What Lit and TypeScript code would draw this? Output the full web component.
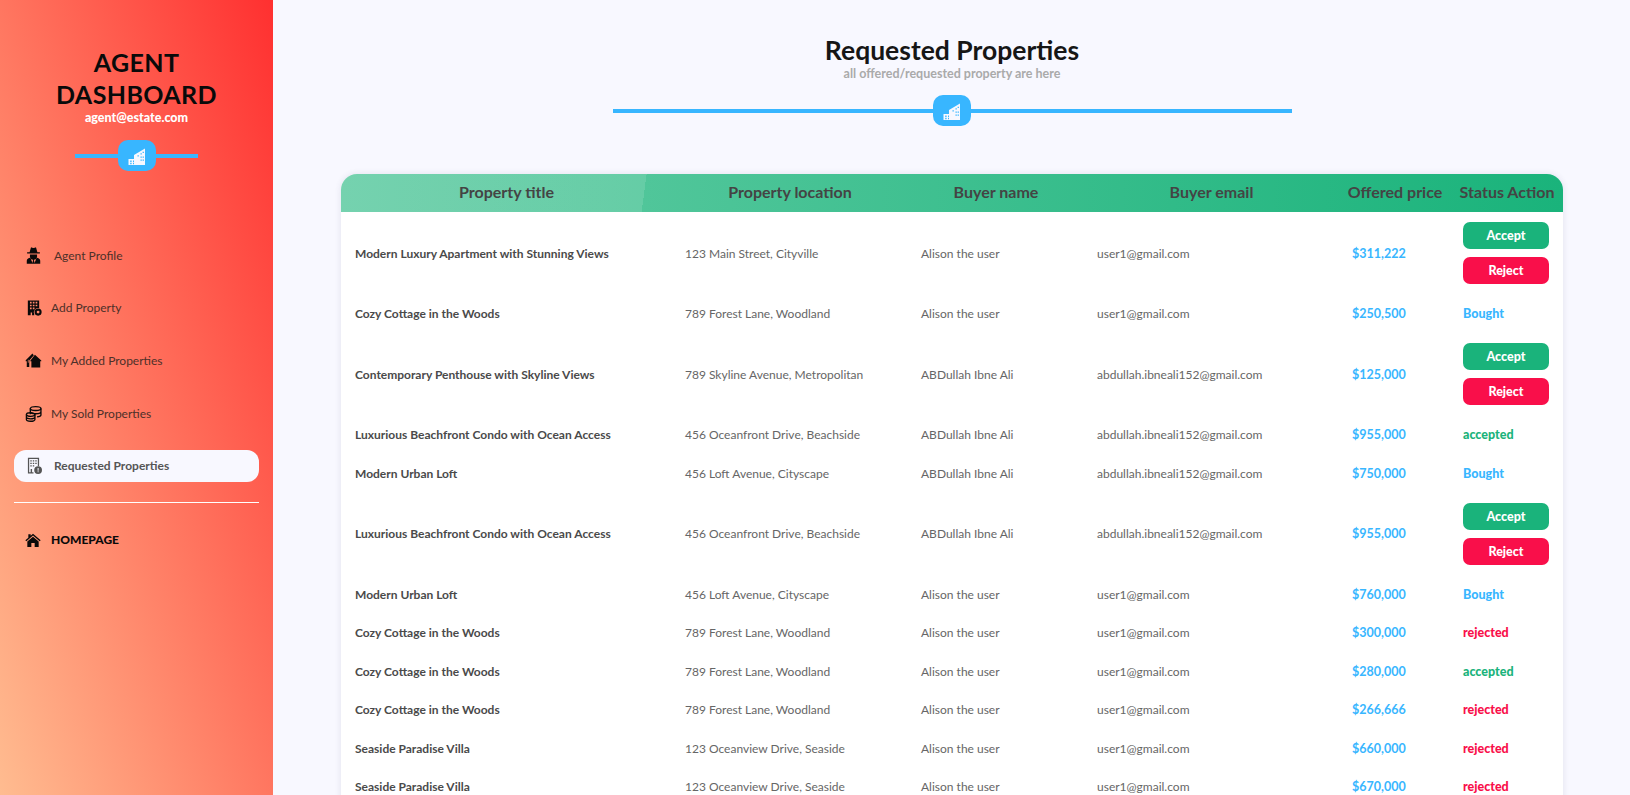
import { LitElement, html, css, svg } from "lit";
import { customElement } from "lit/decorators.js";

type Row = {
  title: string;
  location: string;
  buyer: string;
  email: string;
  price: string;
  status: "pending" | "Bought" | "accepted" | "rejected";
};

const ali = { buyer: "ABDullah Ibne Ali", email: "abdullah.ibneali152@gmail.com" };
const alison = { buyer: "Alison the user", email: "user1@gmail.com" };
const cottage = { title: "Cozy Cottage in the Woods", location: "789 Forest Lane, Woodland", ...alison };
const villa = { title: "Seaside Paradise Villa", location: "123 Oceanview Drive, Seaside", ...alison };
const condo = { title: "Luxurious Beachfront Condo with Ocean Access", location: "456 Oceanfront Drive, Beachside", ...ali };
const loft = { title: "Modern Urban Loft", location: "456 Loft Avenue, Cityscape" };

const rows: Row[] = [
  { title: "Modern Luxury Apartment with Stunning Views", location: "123 Main Street, Cityville", ...alison, price: "$311,222", status: "pending" },
  { ...cottage, price: "$250,500", status: "Bought" },
  { title: "Contemporary Penthouse with Skyline Views", location: "789 Skyline Avenue, Metropolitan", ...ali, price: "$125,000", status: "pending" },
  { ...condo, price: "$955,000", status: "accepted" },
  { ...loft, ...ali, price: "$750,000", status: "Bought" },
  { ...condo, price: "$955,000", status: "pending" },
  { ...loft, ...alison, price: "$760,000", status: "Bought" },
  { ...cottage, price: "$300,000", status: "rejected" },
  { ...cottage, price: "$280,000", status: "accepted" },
  { ...cottage, price: "$266,666", status: "rejected" },
  { ...villa, price: "$660,000", status: "rejected" },
  { ...villa, price: "$670,000", status: "rejected" },
];

const buildingIcon = svg`<path fill-rule="evenodd" d="M9 11 20 4.500V21H9ZM12.500 11.200h1.300v1.300h-1.300ZM15.500 9.200h1.300v1.300h-1.300ZM17.600 7.800h1.300v1.300h-1.300ZM15.500 12.500h1.300v1.300h-1.300ZM17.600 12.500h1.300v1.300h-1.300ZM15.500 15.500h1.300v1.300h-1.300ZM17.600 15.500h1.300v1.300h-1.300Z"/><path fill-rule="evenodd" d="M3.500 15H12.500V21H3.500ZM5.200 16.500h1.400v1.400H5.200ZM8 16.500h1.400v1.400H8ZM5.200 18.800h1.400v1.400H5.200ZM8 18.800h1.400v1.400H8Z"/>`;

const gridWindows = "M7 4h2.400v2.400H7ZM11 4h2.400v2.400H11ZM15 4h2.400v2.400H15ZM7 8h2.400v2.400H7ZM11 8h2.400v2.400H11ZM15 8h2.400v2.400H15ZM7 12h2.400v2.400H7ZM11 12h2.400v2.400H11Z";

const icons = {
  agent: svg`<path d="M8.500 .5c1 .7 2 .9 3.500.9s2.500-.2 3.500-.9l2 7H21v1.800H3V7.500h3.500Z"/><path d="M7 10.500h10v2.500a5 5 0 0 1-10 0Z"/><path d="M2.500 23.500v-4c0-2.500 2.500-4 5-4.200L10.500 22.500l1-4.500-.7-1.500h2.400L12.500 18l1 4.500 3-7.200c2.500.2 5 1.700 5 4.200v4Z"/>`,
  add: svg`<path fill-rule="evenodd" d="M4 2H20V13A6 6 0 0 0 13 21V23H10V19H8V23H4Z${gridWindows}"/><path fill-rule="evenodd" d="M18.500 13.500a5 5 0 1 1 0 10 5 5 0 0 1 0-10ZM18.500 16.500a2 2 0 1 0 0 4 2 2 0 0 0 0-4Z"/>`,
  house: svg`<path d="M14 4 23 12V13H21.500V22H9V13H7.500V12.500Z"/><path d="M10.500 2 1 11.500V13H2.500V21H6V12L12.500 4.500 11.500 3.500 5 10.500V15H4V11.500L11.500 3.500Z"/>`,
  coins: svg`<g fill="none" stroke="currentColor" stroke-width="1.900"><ellipse cx="15" cy="5" rx="7.500" ry="2.800"/><path d="M7.500 5v8M22.500 5v9c0 1.400-2.500 2.500-5.500 2.700M7.500 9.500c0 1.500 3.300 2.800 7.500 2.800s7.500-1.300 7.500-2.800"/><ellipse cx="8" cy="13.500" rx="6" ry="2.500"/><path d="M2 13.500v7c0 1.400 2.700 2.500 6 2.500s6-1.100 6-2.500v-7M2 17c0 1.400 2.700 2.500 6 2.500s6-1.100 6-2.500"/></g>`,
  request: svg`<path fill="none" stroke="currentColor" stroke-width="1.800" d="M12 22.500H5V1.800H19V13"/><path d="M7.500 4.500h2v2h-2ZM11 4.500h2v2h-2ZM14.500 4.500h2v2h-2ZM7.500 8h2v2h-2ZM11 8h2v2h-2ZM14.500 8h2v2h-2ZM7.500 11.500h2v2h-2ZM11 11.500h2v2h-2ZM8 17h2v5.500H8Z"/><path fill-rule="evenodd" d="M18.500 13a5.500 5.500 0 1 1 0 11 5.500 5.500 0 0 1 0-11ZM17.800 15.500v4h1.400v-4ZM17.800 20.200v1.400h1.400v-1.400Z"/>`,
  home: svg`<path d="M12 2.500 23.500 12.500 22 14 12 5.300 2 14 .5 12.500 5 8.600V3.500h3.500v2.100Z"/><path d="M12 7 20.500 14.300V22.500H14.500V16.500H9.500V22.500H3.500V14.300Z"/>`,
};

const menu = [
  { icon: icons.agent, label: "Agent Profile", wide: true },
  { icon: icons.add, label: "Add Property" },
  { icon: icons.house, label: "My Added Properties" },
  { icon: icons.coins, label: "My Sold Properties" },
  { icon: icons.request, label: "Requested Properties", wide: true, active: true },
];

@customElement("app-root")
export class AppRoot extends LitElement {
  static styles = css`
    :host {
      display: flex;
      height: 100vh;
      overflow: hidden;
      background: #f8f8ff;
      font-family: "Lato", "Noto Sans", sans-serif;
      color: #4a4a4a;
    }
    svg {
      display: block;
      fill: currentColor;
      flex: none;
    }
    .sidebar {
      width: 273px;
      flex: none;
      box-sizing: border-box;
      padding: 46px 14px 0;
      background: linear-gradient(to top right, #ffbc90 0%, #ff3030 100%);
    }
    .brand {
      text-align: center;
    }
    .brand h1 {
      margin: 0;
      font-size: 25px;
      line-height: 32px;
      font-weight: 700;
      color: #0a0a0a;
      letter-spacing: 0.4px;
    }
    .brand p {
      margin: 0;
      font-size: 12.500px;
      line-height: 16px;
      font-weight: 900;
      color: #fff;
    }
    .rule {
      display: flex;
      align-items: center;
      justify-content: center;
    }
    .rule::before,
    .rule::after {
      content: "";
      flex: 1;
      height: 4px;
      background: #38b6ff;
    }
    .rule .badge {
      width: 38px;
      height: 31px;
      border-radius: 10px;
      background: #38b6ff;
      color: #f8f8ff;
      display: flex;
      align-items: center;
      justify-content: center;
    }
    .brand .rule {
      width: 123px;
      margin: 14px auto 0;
    }
    nav {
      margin-top: 68px;
      display: flex;
      flex-direction: column;
      gap: 20.700px;
    }
    .item {
      height: 32px;
      display: flex;
      align-items: center;
      gap: 9px;
      padding-left: 11px;
      border-radius: 12px;
      font-size: 12px;
      color: #4d3029;
    }
    .item.wide {
      gap: 12px;
    }
    .item.active {
      background: #f8f8ff;
      color: #555;
      font-weight: 700;
    }
    .item svg {
      color: #0a0a0a;
    }
    .item.active svg {
      color: #555;
    }
    hr {
      margin: 20px 0 21px;
      border: 0;
      border-top: 1px solid #fff;
    }
    .item.home {
      gap: 10px;
      font-weight: 900;
      color: #0a0a0a;
    }
    main {
      flex: 1;
      min-width: 0;
      padding: 34px 67px 0 68px;
    }
    .head {
      width: 679px;
      margin: 0 auto;
      text-align: center;
    }
    .head h2 {
      margin: 0;
      font-size: 26.500px;
      line-height: 32px;
      font-weight: 700;
      color: #161616;
    }
    .head p {
      margin: 0 0 13px;
      font-size: 12.500px;
      line-height: 16px;
      font-weight: 700;
      color: #aaa;
    }
    .card {
      margin-top: 48px;
      border-radius: 16px 16px 0 0;
      overflow: hidden;
      background: #fff;
      box-shadow: 0 0 6px rgba(60, 60, 110, 0.12);
    }
    table {
      width: 100%;
      table-layout: fixed;
      border-collapse: collapse;
    }
    thead {
      background: linear-gradient(97.500deg, rgba(255, 255, 255, 0.12) 303px, transparent 303px),
        linear-gradient(90deg, #62cca4 0%, #1ab37b 100%);
    }
    th {
      height: 35px;
      padding: 0 0 3px;
      font-size: 16px;
      font-weight: 700;
      color: #444;
      text-align: center;
      white-space: nowrap;
    }
    td {
      height: 38.500px;
      padding: 0 0 0 13px;
      font-size: 12px;
      color: #666;
      white-space: nowrap;
    }
    td.title {
      padding-left: 14px;
      font-weight: 700;
      color: #4a4a4a;
    }
    td.price {
      font-size: 12.500px;
      font-weight: 700;
      color: #38b6ff;
    }
    td.status {
      padding-left: 12px;
      font-size: 12.500px;
      font-weight: 900;
    }
    .Bought {
      color: #38b6ff;
    }
    .accepted {
      color: #1ab37b;
    }
    .rejected {
      color: #f90f4a;
    }
    .actions {
      display: flex;
      flex-direction: column;
      gap: 8px;
      width: 86px;
      padding: 10px 0 10.500px;
    }
    button {
      height: 27px;
      padding: 0;
      border: 0;
      border-radius: 7px;
      color: #fff;
      font: 900 12.500px "Lato", sans-serif;
    }
    button.accept {
      background: #1ab37b;
    }
    button.reject {
      background: #f90f4a;
    }
  `;

  private renderStatus(row: Row) {
    if (row.status === "pending") {
      return html`<div class="actions">
        <button class="accept">Accept</button>
        <button class="reject">Reject</button>
      </div>`;
    }
    return html`<span class=${row.status}>${row.status}</span>`;
  }

  render() {
    return html`
      <aside class="sidebar">
        <div class="brand">
          <h1>AGENT<br />DASHBOARD</h1>
          <p>agent@estate.com</p>
          <div class="rule">
            <div class="badge">
              <svg width="24" height="24" viewBox="0 0 24 24">${buildingIcon}</svg>
            </div>
          </div>
        </div>
        <nav>
          ${menu.map(
            (m) => html`<div class="item ${m.wide ? "wide" : ""} ${m.active ? "active" : ""}">
              <svg width="17" height="17" viewBox="0 0 24 24">${m.icon}</svg>
              <span>${m.label}</span>
            </div>`,
          )}
        </nav>
        <hr />
        <div class="item home">
          <svg width="16" height="16" viewBox="0 0 24 24">${icons.home}</svg>
          <span>HOMEPAGE</span>
        </div>
      </aside>
      <main>
        <div class="head">
          <h2>Requested Properties</h2>
          <p>all offered/requested property are here</p>
          <div class="rule">
            <div class="badge">
              <svg width="24" height="24" viewBox="0 0 24 24">${buildingIcon}</svg>
            </div>
          </div>
        </div>
        <div class="card">
          <table>
            <colgroup>
              <col style="width:331px" />
              <col style="width:236px" />
              <col style="width:176px" />
              <col style="width:255px" />
              <col style="width:112px" />
              <col style="width:112px" />
            </colgroup>
            <thead>
              <tr>
                <th>Property title</th>
                <th>Property location</th>
                <th>Buyer name</th>
                <th>Buyer email</th>
                <th>Offered price</th>
                <th>Status Action</th>
              </tr>
            </thead>
            <tbody>
              ${rows.map(
                (r) => html`<tr>
                  <td class="title">${r.title}</td>
                  <td>${r.location}</td>
                  <td>${r.buyer}</td>
                  <td>${r.email}</td>
                  <td class="price">${r.price}</td>
                  <td class="status">${this.renderStatus(r)}</td>
                </tr>`,
              )}
            </tbody>
          </table>
        </div>
      </main>
    `;
  }
}
